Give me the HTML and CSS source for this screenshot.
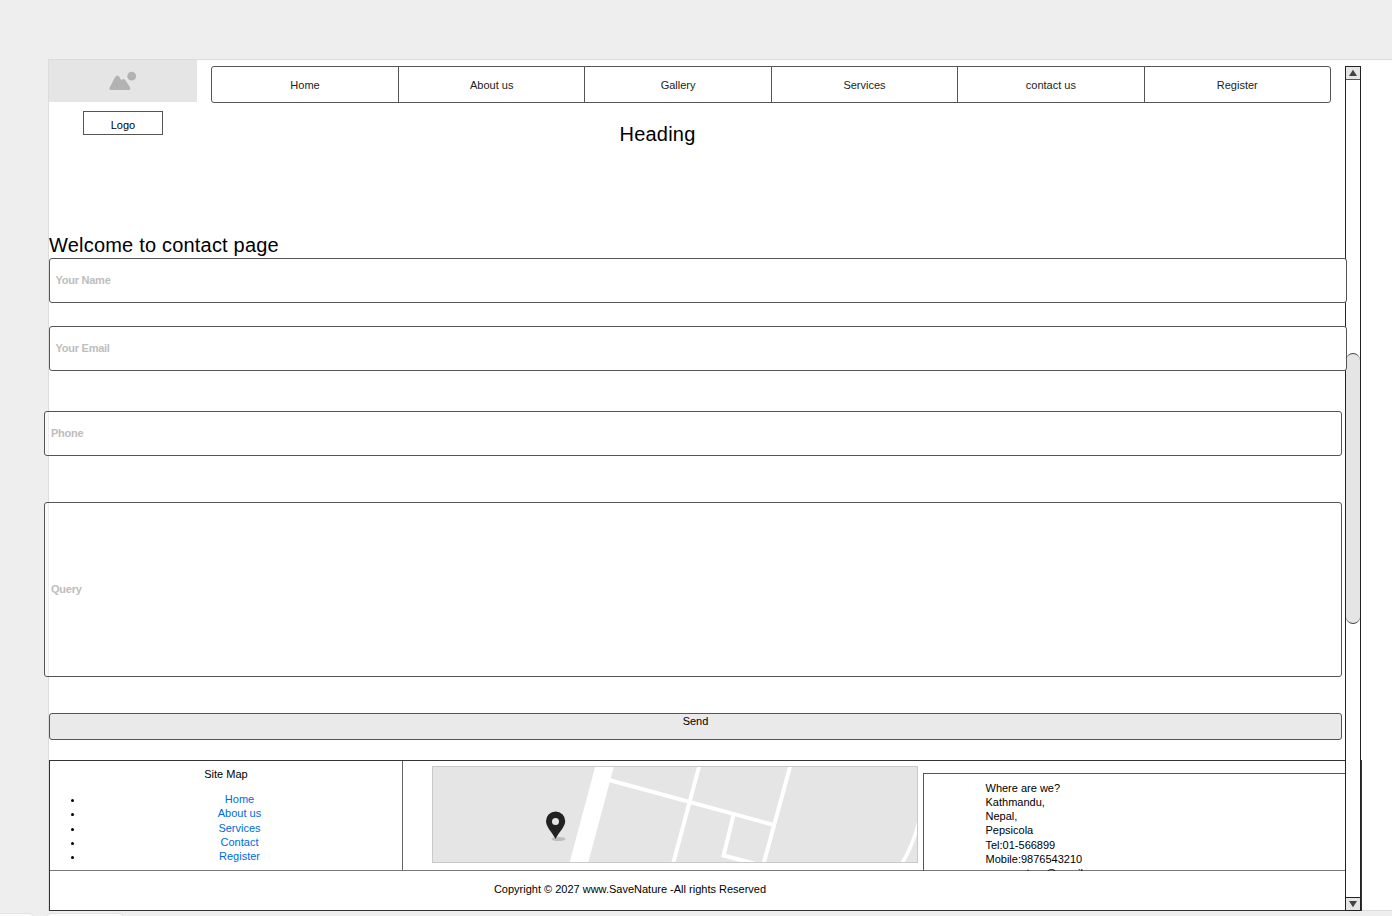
FILE: index.html
```
<!DOCTYPE html>
<html lang="en">
<head>
<meta charset="utf-8">
<title>Contact page</title>
<link rel="stylesheet" href="styles.css">
</head>
<body>
<div class="sheet">
  <main class="page">
    <header class="header">
      <div class="brand">
        <div class="placeholder">
          <svg width="28" height="20" viewBox="0 0 28 20" fill="#b2b2b2"><circle cx="22.7" cy="5.2" r="4.4"/><path d="M.8 16.200 6 6.200Q8.300 2.800 10.600 6.200L12.300 9.300Q14.800 6.500 17 10L20.700 15.800Q22.200 18.900 19.700 18.900H2.200Q-.6 18.900 .8 16.200Z"/></svg>
        </div>
        <div class="logo">Logo</div>
      </div>
      <div class="masthead">
        <nav class="nav"><a>Home</a><a>About us</a><a>Gallery</a><a>Services</a><a>contact us</a><a>Register</a></nav>
        <h1 class="title heading">Heading</h1>
      </div>
    </header>
    <h2 class="title welcome">Welcome to contact page</h2>
    <form class="form">
      <div class="field name">Your Name</div>
      <div class="field email">Your Email</div>
      <div class="field phone">Phone</div>
      <div class="field query">Query</div>
      <div class="send">Send</div>
    </form>
    <footer class="footer">
      <div class="columns">
        <section class="sitemap">
          <h3 class="caption">Site Map</h3>
          <ul class="links"><li><a>Home</a></li><li><a>About us</a></li><li><a>Services</a></li><li><a>Contact</a></li><li><a>Register</a></li></ul>
        </section>
        <svg class="map" width="486" height="97" viewBox="0 0 486 97">
          <rect width="486" height="97" fill="#e5e5e5"/>
          <g fill="none" stroke="#fff" stroke-width="4">
            <path d="M173.500-3 146 100" stroke-width="18"/>
            <path d="M177 14 342 59M267.500-1 241 98M358.500-1 331.500 98M301.500 49 291.500 89.500 324 98"/>
            <path d="M487 55Q481 80 469 99" stroke-width="3.500"/>
          </g>
          <ellipse cx="126.500" cy="73" rx="7" ry="2" fill="#bcbcbc"/>
          <path d="M123.500 73C120 66 114 61 114 55A9.600 9.600 0 0 1 133.200 55C133.200 61 127 66 123.500 73Z" fill="#222"/>
          <circle cx="123.500" cy="55.600" r="3.500" fill="#e5e5e5"/>
          <rect x=".5" y=".5" width="485" height="96" fill="none" stroke="#c9c9c9"/>
        </svg>
        <address class="address">Where are we?<br>Kathmandu,<br>Nepal,<br>Pepsicola<br>Tel:01-566899<br>Mobile:9876543210<br>savesnature@gmail.com</address>
      </div>
      <p class="copyright">Copyright © 2027 www.SaveNature -All rights Reserved</p>
    </footer>
  </main>
  <aside class="scrollbar">
    <div class="arrow up"><svg width="10" height="8" viewBox="0 0 10 8"><path d="M5 .8 9 7H1Z" fill="#444"/></svg></div>
    <div class="track"><div class="thumb"></div></div>
    <div class="arrow down"><svg width="10" height="8" viewBox="0 0 10 8"><path d="M5 7.200 9 1H1Z" fill="#444"/></svg></div>
  </aside>
</div>
<div class="tabs"><div class="tab first"></div><div class="tab"></div></div>
</body>
</html>
```
FILE: styles.css
```
* { box-sizing: border-box; }
body {
  margin: 0;
  height: 916px;
  overflow: hidden;
  padding-top: 59px;
  background: #eee;
  color: #000;
  font: 11px/14.15px "Liberation Sans", Arial, sans-serif;
}
.sheet {
  display: grid;
  grid-template-columns: 1296px 16px;
  height: 852px;
  margin-left: 48px;
  background: #fff;
  border: 1px solid #dcdcdc;
  border-right: 0;
}
.page { display: flex; flex-direction: column; }
.header { display: flex; gap: 14px; height: 172px; }
.brand { width: 148px; }
.placeholder {
  display: flex;
  justify-content: center;
  height: 42px;
  padding-top: 11px;
  background: #e5e5e5;
}
.logo {
  width: 80px;
  height: 24px;
  margin: 9px 0 0 34px;
  padding-top: 6px;
  border: 1px solid #555;
  text-align: center;
}
.masthead { width: 1120px; padding-top: 6px; }
.nav {
  display: grid;
  grid-template-columns: 186px repeat(5, 1fr);
  height: 37px;
  border: 1px solid #555;
  border-radius: 3px;
}
.nav a {
  display: flex;
  align-items: center;
  justify-content: center;
  padding-top: 2px;
  border-left: 1px solid #555;
  color: #222;
}
.nav a:first-child { border-left: 0; }
.title { margin: 0; font-size: 20px; font-weight: 400; line-height: 24px; letter-spacing: .2px; }
.heading { width: 893px; padding-top: 19px; text-align: center; }
.welcome { height: 26px; padding-top: 1px; }
.form { height: 502px; }
.field {
  display: flex;
  align-items: center;
  position: relative;
  z-index: 2;
  width: 1298px;
  height: 45px;
  padding-left: 5.5px;
  border: 1px solid #555;
  border-radius: 3px;
  background: #fff;
  color: #bdbdbd;
  font-weight: 700;
  letter-spacing: -.25px;
}
.email { margin-top: 23px; }
.phone, .query {
  margin-left: -5px;
  padding-left: 6px;
  background: linear-gradient(90deg, #fafafa 3px, #ededed 3px, #ededed 4px, #fff 4px);
}
.phone { margin-top: 40px; }
.query { height: 175px; margin-top: 46px; }
.send {
  width: 1293px;
  height: 27px;
  margin-top: 36px;
  border: 1px solid #555;
  border-radius: 3px;
  background: #eaeaea;
  text-align: center;
}
.footer {
  width: 1313px;
  height: 151px;
  border: 1px solid #333;
}
.columns { display: flex; height: 110px; border-bottom: 1px solid #777; }
.sitemap { width: 353px; padding-top: 6px; border-right: 1px solid #666; }
.caption { margin: 0; font-size: 11px; font-weight: 400; text-align: center; }
.links { margin: 11px 7px 0 0; padding-left: 34px; line-height: 14.2px; text-align: center; }
.links a { color: #0069e0; }
.map { margin: 5px 0 0 29px; }
.address {
  flex: 1;
  height: 98px;
  margin: 12px 0 0 5px;
  padding: 7px 0 0 61.5px;
  overflow: hidden;
  border: solid #555;
  border-width: 1px 0 0 1px;
  font-style: normal;
}
.copyright { width: 1160px; margin: 11px 0 0; text-align: center; }
.scrollbar {
  position: relative;
  z-index: 1;
  display: flex;
  flex-direction: column;
  height: 845px;
  margin-top: 6px;
  border: 1px solid #222;
  background: #fff;
}
.arrow { display: flex; align-items: center; justify-content: center; height: 13px; background: #e5e5e5; }
.up { border-bottom: 1px solid #555; }
.down { border-top: 1px solid #222; }
.track { flex: 1; padding-top: 273px; }
.thumb { height: 271px; border: solid #444; border-width: 1px 0; border-radius: 7px; background: #e5e5e5; }
.tabs { display: flex; gap: 12px; padding-top: 2px; }
.tab { width: 78px; height: 10px; border: 1px solid #e2e2e2; border-radius: 5px; background: #fbfbfb; }
.first { width: 34px; border-left: 0; border-top-left-radius: 0; }
```
